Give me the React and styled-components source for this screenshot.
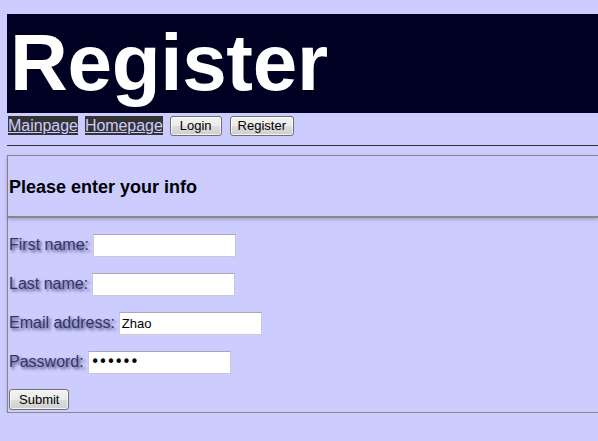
import React from "react";
import styled, { createGlobalStyle } from "styled-components";

const GlobalStyle = createGlobalStyle`
  html, body {
    margin: 0;
    padding: 0;
    background: #ccccff;
    overflow: hidden;
  }
  body {
    font-family: "Liberation Sans", Arial, sans-serif;
  }
`;

const Page = styled.div`
  padding: 14px 0 0 7px;
`;

const Banner = styled.h1`
  margin: 0;
  background: #000022;
  color: #fff;
  font-size: 80px;
  font-weight: bold;
  height: 99px;
  line-height: 97px;
  padding-left: 3px;
  letter-spacing: -0.3px;
`;

const Nav = styled.nav`
  display: flex;
  align-items: center;
  gap: 7px;
  padding: 2px 0 0 1px;
  height: 21px;
`;

const NavLink = styled.a`
  background: #333333;
  color: #ccccff;
  font-size: 16px;
  line-height: 19px;
  text-decoration: underline;
  letter-spacing: -0.05px;
`;

const Button = styled.button`
  font-family: "Liberation Sans", Arial, sans-serif;
  font-size: 13px;
  color: #000;
  height: 20px;
  padding: 0 ${(p) => p.$pad || 10}px;
  border: 1px solid #707070;
  border-radius: 3px;
  background: linear-gradient(#f2f2f2 0%, #ebebeb 50%, #dddddd 51%, #cfcfcf 100%);
  box-shadow: inset 0 0 0 1px rgba(255, 255, 255, 0.7);
  margin-left: ${(p) => p.$ml || 0}px;
`;

const Rule = styled.hr`
  margin: 9px 0 0 0;
  border: none;
  border-top: 1px solid #333333;
  height: 0;
`;

const Panel = styled.section`
  margin-top: 9px;
  border: 1px solid #888888;
  border-right: none;
  box-shadow: 0 2px 3px rgba(100, 100, 140, 0.35);
`;

const PanelHead = styled.div`
  height: 58px;
  display: flex;
  align-items: center;
  padding: 2px 0 0 1px;
  border-bottom: 2px solid #888888;
  box-shadow: 0 2px 3px rgba(100, 100, 140, 0.35);
`;

const Title = styled.h2`
  margin: 0;
  font-size: 18px;
  font-weight: bold;
  color: #000;
`;

const Form = styled.form`
  display: grid;
  row-gap: 17px;
  padding: 16px 0 2px 1px;
  justify-items: start;
`;

const Row = styled.label`
  display: flex;
  align-items: center;
  gap: 4px;
  height: 22px;
`;

const LabelText = styled.span`
  font-size: 16px;
  color: #333366;
  text-shadow: 2px 2px 3px rgba(40, 40, 80, 0.8);
`;

const Input = styled.input`
  box-sizing: border-box;
  width: 143px;
  height: 23px;
  border: 1px solid #c8c8d8;
  border-top-color: #a8a8b8;
  background: #fff;
  font-family: "Liberation Sans", Arial, sans-serif;
  font-size: 13px;
  color: #000;
  padding: 1px 2px;
  outline: none;

  &[type="password"] {
    font-family: "DejaVu Sans", sans-serif;
    font-size: 15px;
    letter-spacing: -1px;
  }
`;

const Submit = styled(Button)`
  margin-top: -1px;
  height: 21px;
`;

export default function App() {
  return (
    <Page>
      <GlobalStyle />
      <Banner>Register</Banner>
      <Nav>
        <NavLink href="#">Mainpage</NavLink>
        <NavLink href="#">Homepage</NavLink>
        <Button $pad={9}>Login</Button>
        <Button $pad={7} $ml={1}>Register</Button>
      </Nav>
      <Rule />
      <Panel>
        <PanelHead>
          <Title>Please enter your info</Title>
        </PanelHead>
        <Form onSubmit={(e) => e.preventDefault()}>
          <Row>
            <LabelText>First name:</LabelText>
            <Input type="text" />
          </Row>
          <Row>
            <LabelText>Last name:</LabelText>
            <Input type="text" />
          </Row>
          <Row>
            <LabelText>Email address:</LabelText>
            <Input type="text" defaultValue="Zhao" />
          </Row>
          <Row>
            <LabelText>Password:</LabelText>
            <Input type="password" defaultValue="123456" />
          </Row>
          <Submit $pad={9}>Submit</Submit>
        </Form>
      </Panel>
    </Page>
  );
}
